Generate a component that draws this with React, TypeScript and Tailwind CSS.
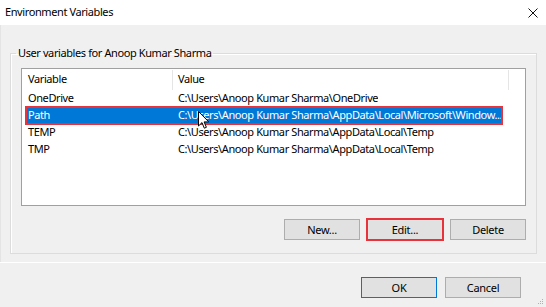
import React from "react";

type Row = { name: string; value: string; selected?: boolean };

const rows: Row[] = [
  { name: "OneDrive", value: "C:\\Users\\Anoop Kumar Sharma\\OneDrive" },
  {
    name: "Path",
    value: "C:\\Users\\Anoop Kumar Sharma\\AppData\\Local\\Microsoft\\Window...",
    selected: true,
  },
  { name: "TEMP", value: "C:\\Users\\Anoop Kumar Sharma\\AppData\\Local\\Temp" },
  { name: "TMP", value: "C:\\Users\\Anoop Kumar Sharma\\AppData\\Local\\Temp" },
];

function Button({ label, primary, marked }: { label: string; primary?: boolean; marked?: boolean }) {
  return (
    <button
      className={
        "h-[21px] w-[76px] bg-[#e1e1e1] text-[11px] tracking-[-0.3px] leading-none text-black border " +
        (primary ? "border-[#0078d7] " : "border-[#adadad] ") +
        (marked ? "outline-2 outline-[#e8333a] -outline-offset-1" : "")
      }
    >
      {label}
    </button>
  );
}

function Cursor() {
  // mouse pointer sitting over the selected row
  return (
    <svg
      className="absolute left-[176px] top-[42px]"
      width="12"
      height="19"
      viewBox="0 0 12 19"
    >
      <path
        d="M0.5 0.5 L0.5 15 L4 11.6 L6.3 17.2 L8.4 16.3 L6.1 10.9 L10.8 10.9 Z"
        fill="#fff"
        stroke="#000"
        strokeWidth="1"
      />
    </svg>
  );
}

export default function App() {
  return (
    <div
      className="w-[546px] h-[307px] flex flex-col bg-[#f0f0f0] overflow-hidden tracking-[-0.4px]"
      style={{ fontFamily: '"Noto Sans", "Open Sans", sans-serif' }}
    >
      {/* title bar */}
      <div className="h-[25px] bg-white flex items-center justify-between pl-[5px] pr-[8px]">
        <span className="text-[11px] text-black">Environment Variables</span>
        <svg width="10" height="10" viewBox="0 0 10 10">
          <path d="M0.5 0.5 L9.5 9.5 M9.5 0.5 L0.5 9.5" stroke="#111" strokeWidth="1" />
        </svg>
      </div>

      {/* user variables group */}
      <div className="flex-1 border-l border-[#e4e4e4]">
        <fieldset className="mt-[20px] ml-[9px] mr-[9px] h-[209px] border border-[#dcdcdc] shadow-[inset_1px_1px_0_#fff] px-[10px]">
          <legend className="-ml-[5px] px-[2px] text-[11px] leading-[16px] text-black">
            User variables for Anoop Kumar Sharma
          </legend>

          <div className="relative mt-[7px] h-[138px] border border-[#a0a0a0] bg-white text-[11px] text-black">
            <div className="flex h-[21px] items-center">
              <div className="w-[151px] h-[20px] pl-[6px] flex items-center border-r border-[#e5e5e5]">Variable</div>
              <div className="w-[336px] h-[20px] pl-[5px] flex items-center border-r border-[#e5e5e5]">Value</div>
            </div>
            {rows.map((r) => (
              <div
                key={r.name}
                className={
                  "ml-[4px] w-[476px] h-[17px] flex items-center " +
                  (r.selected
                    ? "bg-[#0078d7] text-white outline-2 outline-[#e8333a] -outline-offset-1"
                    : "")
                }
              >
                <div className="w-[146px] shrink-0 pl-[2px]">{r.name}</div>
                <div className="pl-[6px] min-w-0 overflow-hidden whitespace-nowrap">{r.value}</div>
              </div>
            ))}
            <Cursor />
          </div>

          <div className="mt-[13px] flex justify-end gap-[7px]">
            <Button label="New..." />
            <Button label="Edit..." marked />
            <Button label="Delete" />
          </div>
        </fieldset>
      </div>

      {/* bottom buttons */}
      <div className="relative h-[45px] border-t border-white flex justify-end items-start pt-[14px] pr-[25px] gap-[8px]">
        <Button label="OK" primary />
        <Button label="Cancel" />
        <svg className="absolute right-[2px] bottom-[2px]" width="6" height="6" viewBox="0 0 6 6">
          <rect x="4" y="0" width="1" height="1" fill="#b0b0b0" />
          <rect x="2" y="2" width="1" height="1" fill="#b0b0b0" />
          <rect x="4" y="2" width="1" height="1" fill="#b0b0b0" />
          <rect x="0" y="4" width="1" height="1" fill="#b0b0b0" />
          <rect x="2" y="4" width="1" height="1" fill="#b0b0b0" />
          <rect x="4" y="4" width="1" height="1" fill="#b0b0b0" />
        </svg>
      </div>
    </div>
  );
}
